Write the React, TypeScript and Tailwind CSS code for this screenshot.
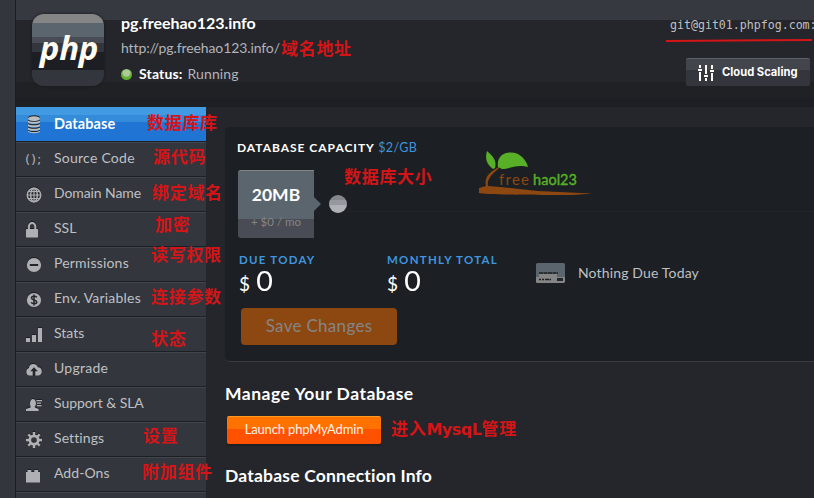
import React from "react";

const icons: Record<string, React.ReactNode> = {
  database: (
    <g fill="#b9bfbe">
      <ellipse cx="9" cy="2.6" rx="6" ry="2.3" />
      <path d="M3 4.4c1.6 1.7 10.4 1.7 12 0v2c-1.6 1.9-10.4 1.9-12 0zM3 7.9c1.6 1.7 10.4 1.7 12 0v2c-1.6 1.9-10.4 1.9-12 0zM3 11.4c1.6 1.7 10.4 1.7 12 0v2c-1.6 1.9-10.4 1.9-12 0zM3 14.7c1.6 1.7 10.4 1.7 12 0v.8c-1 2.3-11 2.3-12 0z" />
    </g>
  ),
  globe: (
    <g fill="none" stroke="#afb0b3" strokeWidth="1.5">
      <circle cx="9" cy="9" r="6.7" />
      <ellipse cx="9" cy="9" rx="3.3" ry="6.7" />
      <path d="M9 2v14M2 9h14M3.3 5.5h11.4M3.3 12.5h11.4" strokeWidth="1.2" />
    </g>
  ),
  lock: (
    <g>
      <path d="M3.9 8V5.8a3.2 3.8 0 0 1 6.4 0V8" fill="none" stroke="#afb0b3" strokeWidth="2" />
      <rect x="1" y="8" width="12" height="8.5" rx=".7" fill="#afb0b3" />
    </g>
  ),
  minus: (
    <g>
      <circle cx="9" cy="9" r="7.1" fill="#afb0b3" />
      <rect x="4.8" y="8" width="8.4" height="2" fill="#24262b" />
    </g>
  ),
  dollar: (
    <g>
      <circle cx="9" cy="9" r="7.1" fill="#afb0b3" />
      <path d="M11.8 6.3C10.5 4.6 6.5 4.8 6.5 7c0 2.5 5.3 1.4 5.3 4 0 2.3-4.3 2.3-5.7.4M9 3.6v10.8" fill="none" stroke="#24262b" strokeWidth="1.5" />
    </g>
  ),
  stats: <path d="M1 12h4v4H1zM7 9h4v7H7zM13 2h4v14h-4z" fill="#afb0b3" />,
  cloud: (
    <g>
      <path d="M4.8 14.5a3.8 3.8 0 0 1-.8-7.4C3.8 2 11.500 1.500 12.800 6.200a4.200 4.200 0 0 1 .6 8.300z" fill="#afb0b3" />
      <path d="M9 6.300l3.800 4H10.300V15H7.700v-4.700H5.200z" fill="#24262b" />
    </g>
  ),
  support: (
    <g fill="#afb0b3">
      <path d="M5 7.500C5 1.500 11 1.500 11 7.500c0 1.400-.7 2.400-1.300 3l.2 1.100 3.700 1.500V15H1v-1.900l4.500-1.500.2-1.100C5.200 9.800 5 8.800 5 7.500zM11.500 4H17v1.200h-5.500zM12 6.500h4v1.200h-4zM12 9h4.500v1.200H12z" />
    </g>
  ),
  gear: (
    <g stroke="#afb0b3" fill="none">
      <circle cx="9" cy="9" r="4.200" strokeWidth="2.800" />
      <path d="M9 1v3M9 14v3M1 9h3M14 9h3M3.300 3.300l2.200 2.200M12.500 12.500l2.200 2.200M14.700 3.300l-2.200 2.200M5.500 12.500l-2.200 2.200" strokeWidth="2.400" />
    </g>
  ),
  brick: <path d="M1 6h1.500V4h3.800v2h3V4h3.800v2H15v10.500H1z" fill="#afb0b3" />,
};

const menu = [
  ["Source Code", "code", "tracking-[0.25px]"],
  ["Domain Name", "globe", "tracking-[-0.1px]"],
  ["SSL", "lock", ""],
  ["Permissions", "minus", "tracking-[0.2px]"],
  ["Env. Variables", "dollar", "tracking-[0.2px]"],
  ["Stats", "stats", ""],
  ["Upgrade", "cloud", "tracking-[0.25px]"],
  ["Support & SLA", "support", "tracking-[-0.05px]"],
  ["Settings", "gear", "tracking-[0.1px]"],
  ["Add-Ons", "brick", "tracking-[0.05px]"],
];

function Icon({ name }: { name: string }) {
  if (name === "code")
    return <span className="w-[18px] whitespace-nowrap font-['DejaVu_Sans'] text-[13px] leading-none tracking-[0.9px] text-[#afb0b3]">();</span>;
  return (
    <svg width="18" height="18" viewBox="0 0 18 18" className="mt-px shrink-0 drop-shadow-[0_-1px_0_#1d1f23]">
      {icons[name]}
    </svg>
  );
}

function Note({ at, children }: { at: string; children: React.ReactNode }) {
  return (
    <span className={`absolute whitespace-nowrap font-['Noto_Sans_CJK_SC',sans-serif] text-[17px] leading-[18px] font-bold tracking-[0.7px] text-[#d41518] ${at}`}>
      {children}
    </span>
  );
}

function Sidebar() {
  return (
    <nav className="w-[190px] shrink-0 text-[14px] text-[#bfc0c4]">
      <div className="flex h-[35px] items-center border-b border-[#1c1f23] bg-[linear-gradient(#429ae2_0_8px,#338bda_8px_15px,#1f74d4_15px)] pl-[9px] text-[14.5px] font-bold text-white">
        <Icon name="database" />
        <span className="ml-[11px] pb-px tracking-[0.1px]">Database</span>
      </div>
      {menu.map(([label, icon, tracking]) => (
        <div key={label} className="flex h-[35px] items-center border-t border-b border-t-[#41444a] border-b-[#1c1f23] bg-[#33363d] pl-[9px]">
          <Icon name={icon} />
          <span className={`ml-[11px] pb-[4px] ${tracking}`}>{label}</span>
        </div>
      ))}
      <div className="h-[6px] border-t border-[#41444a] bg-[#33363d]" />
    </nav>
  );
}

function Header() {
  return (
    <header className="flex h-[107px] shrink-0 bg-[linear-gradient(#363940_0_20px,#25262b_20px_82px,#1f2125_82px_98px,#1c1f23_98px)]">
      <div className="mt-[14px] ml-[16px] flex h-[72px] w-[72px] items-center justify-center rounded-[12px] bg-[linear-gradient(#858585_0_9px,#5b656d_9px_23px,#494c54_23px_29px,#34363d_29px_38px,#1d1e23_38px_56px,#33363d_56px)] shadow-[0_0_3px_#17191d]">
        <span className="pb-[5px] pl-[2px] font-['Open_Sans',sans-serif] text-[33px] leading-none font-bold tracking-[-0.2px] text-[#fffaf0] italic">php</span>
      </div>
      <div className="ml-[17px] flex flex-col pt-[14px]">
        <h1 className="text-[16px] leading-[18px] font-bold tracking-[-0.05px] text-white">pg.freehao123.info</h1>
        <p className="mt-[7px] text-[14px] leading-[18px] tracking-[-0.1px] text-[#b1b4bc]">http://pg.freehao123.info/</p>
        <p className="mt-[8px] flex items-center text-[14px] leading-[18px] tracking-[0.1px] text-[#b1b4bc]">
          <span className="mr-[7px] h-[11px] w-[11px] rounded-full bg-[radial-gradient(circle_at_50%_35%,#adc99a_0_3px,#5fae2c_5px)]" />
          <b className="mr-[5px] tracking-[0.15px] text-white">Status:</b> Running
        </p>
      </div>
      <div className="ml-auto flex w-[144px] flex-col pt-[18px]">
        <div className="w-[148px] overflow-hidden font-['DejaVu_Sans_Mono',monospace] text-[11.6px] leading-[15px] whitespace-nowrap text-[#bfc0c4]">git@git01.phpfog.com:</div>
        <svg className="mt-px -ml-[4px] h-[9px] w-[148px] shrink-0" viewBox="0 0 148 9"><path d="M0 7L146 6" stroke="#d41518" strokeWidth="2" /></svg>
        <button className="mt-[15px] ml-[16px] flex h-[28px] w-[124px] items-center rounded-[2px] border-t border-[#5b6269] bg-[linear-gradient(#42454c_0_11px,#33363d_11px)] pl-[11px] font-['Inter',sans-serif] text-[11.2px] font-bold whitespace-nowrap text-white">
          <svg width="18" height="18" viewBox="0 0 18 18" className="mr-[7px] shrink-0">
            <path d="M3 1v3M3 8v9M9 1v9M9 14v3M15 1v4M15 9v8" stroke="#fffaf0" strokeWidth="2" />
            <path d="M1 6h4M7 12h4M13 7h4" stroke="#fffaf0" strokeWidth="2" />
          </svg>
          Cloud Scaling
        </button>
      </div>
    </header>
  );
}

function Total({ label, width }: { label: string; width: string }) {
  return (
    <div className={width}>
      <div className="text-[11.5px] leading-[14px] font-bold tracking-[1.25px] text-[#3f95df]">{label}</div>
      <div className="-mt-px flex items-baseline text-[26px] leading-[30px] text-white"><span className="mr-[7px] text-[19px]">$</span><span className="inline-block scale-x-110">0</span></div>
    </div>
  );
}

function Logo() {
  return (
    <svg className="absolute top-[149px] left-[476px]" width="116" height="48" viewBox="0 0 116 48">
      <path d="M3 44c5 2 80 2 93 2 6-.3 14-1 20-1.500L62 42 24 38 12 37c-1-6 2-10 10-17l3-4-4 3c-8 5-13 9-11 18l-7 2z" fill="#8d4711" />
      <path d="M11 2c6 5 10 10 8 17l-2 1C10 15 9 9 11 2z" fill="#58b027" />
      <path d="M22 18C20 5 32 1 42 5c5 3 9 8 10 13-12-3-18 2-26 2z" fill="#58b027" />
      <g fontFamily="Lato, sans-serif" fontSize="15">
        <text x="23" y="36" textLength="30" fill="#8d4711">free</text>
        <text x="57" y="36" textLength="44" fontSize="14.500" fill="#58b027" stroke="#58b027" strokeWidth=".4">haol23</text>
      </g>
    </svg>
  );
}

function Capacity() {
  return (
    <section className="mt-[20px] ml-[19px] h-[235px] rounded-l-[5px] border-b border-[#383a40] bg-[#1c1f23] pl-[12px]">
      <h2 className="pt-[12px] text-[12px] leading-[18px] font-bold tracking-[0.98px] text-white">
        DATABASE CAPACITY <span className="text-[12.5px] font-normal tracking-[0.35px] text-[#3f95df]">$2/GB</span>
      </h2>
      <div className="mt-[13px] ml-px flex h-[68px] items-center">
        <div className="flex h-[68px] w-[76px] flex-col items-center rounded-l-[3px] border-t border-[#858585] bg-[linear-gradient(#5b656d_0_48px,#494c54_48px)]">
          <span className="mt-[12px] text-[17.5px] leading-[24px] font-bold text-white">20MB</span>
          <span className="mt-[7px] text-[11.5px] leading-[16px] text-[#858585]">+ $0 / mo</span>
        </div>
        <svg width="7" height="14" viewBox="0 0 7 14"><path d="M0 0l7 7-7 7z" fill="#5b656d" /></svg>
        <span className="ml-[8px] h-[18px] w-[18px] rounded-full bg-[linear-gradient(#85878b_0_5px,#9698a0_5px_10px,#b0b1b6_10px)]" />
        <span className="mt-[15px] h-px flex-1 bg-[#202328]" />
      </div>
      <div className="mt-[15px] ml-[2px] flex">
        <Total label="DUE TODAY" width="w-[148px]" />
        <Total label="MONTHLY TOTAL" width="w-[149px]" />
        <div className="mt-[10px] flex h-[20px] items-center">
          <svg width="29" height="20" viewBox="0 0 29 20">
            <rect width="29" height="20" rx="1.500" fill="#5b656d" />
            <path d="M3 11h18v3h8v4.500l-1.500 1.500H1l-1-1v-5h3z" fill="#858585" />
            <path d="M3 10h19M3 16.500h2m1 0h2m1 0h6" stroke="#1c1f23" strokeWidth="1.500" strokeDasharray="4 .5" />
            <rect x="21" y="15" width="6" height="3" fill="#25262b" />
          </svg>
          <span className="ml-[13px] pb-[2px] text-[14px] tracking-[0.15px] text-[#bfc0c4]">Nothing Due Today</span>
        </div>
      </div>
      <button className="mt-[9px] ml-[4px] h-[37px] w-[156px] rounded-[4px] bg-[#8d4711] pb-px text-[17px] tracking-[0.3px] text-[#858585]">Save Changes</button>
    </section>
  );
}

export default function App() {
  return (
    <div className="relative flex h-[498px] w-[814px] overflow-hidden bg-[#33363d] font-['Lato',sans-serif]">
      <div className="w-[16px] shrink-0 border-r border-[#1c1f23]" />
      <div className="flex min-w-0 flex-1 flex-col bg-[#25262b]">
        <Header />
        <div className="flex">
          <Sidebar />
          <main className="min-w-0 flex-1">
            <Capacity />
            <div className="ml-[19px]">
              <h2 className="mt-[21px] text-[17.5px] leading-[22px] font-bold tracking-[0.5px] text-white">Manage Your Database</h2>
              <button className="mt-[11px] ml-[2px] block h-[28px] w-[154px] rounded-[2px] border-t border-[#ff9a20] bg-[linear-gradient(#ff7200_0_12px,#ff5200_12px)] pb-px text-[13px] tracking-[-0.15px] text-[#fff4e8] shadow-[0_2px_1px_#1c1f23]">Launch phpMyAdmin</button>
              <h2 className="mt-[21px] text-[17.5px] leading-[22px] font-bold tracking-[0.2px] text-white">Database Connection Info</h2>
            </div>
          </main>
        </div>
      </div>
      <Logo />
      <Note at="top-[39px] left-[281px]">域名地址</Note>
      <Note at="top-[113px] left-[147px]">数据库库</Note>
      <Note at="top-[147px] left-[153px]">源代码</Note>
      <Note at="top-[183px] left-[152px]">绑定域名</Note>
      <Note at="top-[215px] left-[155px]">加密</Note>
      <Note at="top-[245px] left-[151px]">读写权限</Note>
      <Note at="top-[287px] left-[151px]">连接参数</Note>
      <Note at="top-[329px] left-[151px]">状态</Note>
      <Note at="top-[426px] left-[143px]">设置</Note>
      <Note at="top-[462px] left-[142px]">附加组件</Note>
      <Note at="top-[167px] left-[344px]">数据库大小</Note>
      <Note at="top-[419px] left-[391px]">进入<span className="font-['DejaVu_Sans'] text-[16px] tracking-[-0.5px]">MysqL</span>管理</Note>
    </div>
  );
}
